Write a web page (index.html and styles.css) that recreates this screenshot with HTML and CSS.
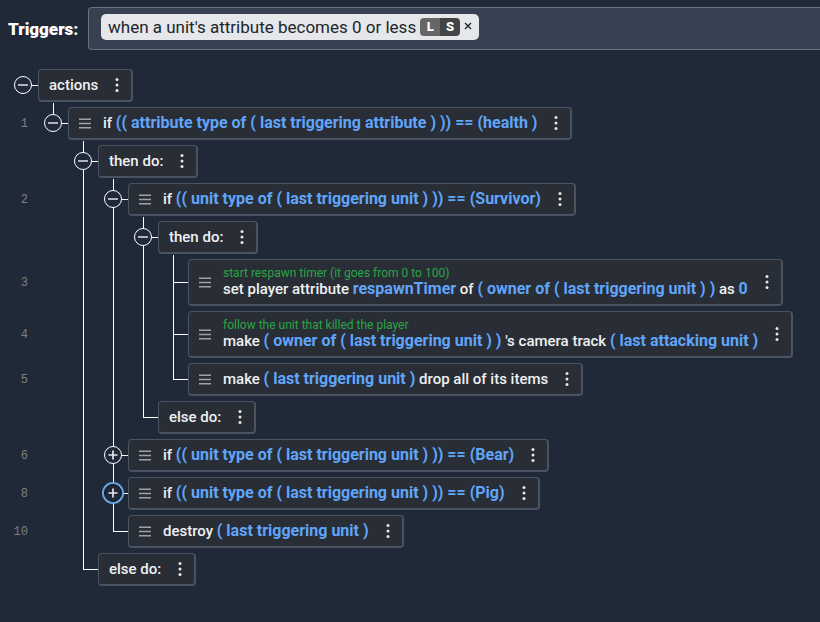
FILE: index.html
```html
<!DOCTYPE html>
<html lang="en">
<head>
<meta charset="utf-8">
<title>Script editor</title>
<link rel="stylesheet" href="styles.css">
</head>
<body>
<svg class="defs" aria-hidden="true">
  <symbol id="dots" viewBox="0 0 4 16"><circle cx="2" cy="2.5" r="1.5"/><circle cx="2" cy="8" r="1.5"/><circle cx="2" cy="13.5" r="1.5"/></symbol>
  <symbol id="grip" viewBox="0 0 12 11"><path d="M0 1.2h12M0 5.5h12M0 9.8h12" stroke="currentColor" stroke-width="1.6"/></symbol>
  <symbol id="minus" viewBox="0 0 12 12"><path d="M1 6h10" stroke="currentColor" stroke-width="2"/></symbol>
  <symbol id="plus" viewBox="0 0 12 12"><path d="M1.5 6h9M6 1.5v9" stroke="currentColor" stroke-width="1.7"/></symbol>
</svg>
<header class="triggers">
  <span class="triggers-label">Triggers:</span>
  <div class="field">
    <span class="tag"><span class="tag-text">when a unit's attribute becomes 0 or less</span><span class="badges"><b class="local">L</b><b class="server">S</b></span><button class="remove" aria-label="Remove trigger"><svg viewBox="0 0 8 8"><path d="M1 1l6 6M7 1l-6 6" stroke="currentColor" stroke-width="1.4"/></svg></button></span>
  </div>
</header>
<main class="tree">
  <div class="row">
    <div class="gutter root"><button class="toggle" aria-label="Collapse"><svg><use href="#minus"/></svg></button></div>
    <div class="node"><span class="text">actions</span><button class="menu" aria-label="Menu"><svg><use href="#dots"/></svg></button></div>
  </div>
  <div class="row">
    <div class="gutter">1</div><i class="slot end first"><button class="toggle" aria-label="Collapse"><svg><use href="#minus"/></svg></button></i>
    <div class="node"><svg class="grip"><use href="#grip"/></svg><span class="text">if <a href="#">(( attribute type of ( last triggering attribute ) )) == (health )</a></span><button class="menu" aria-label="Menu"><svg><use href="#dots"/></svg></button></div>
  </div>
  <div class="row">
    <div class="gutter"></div><i class="slot"></i><i class="slot tee first"><button class="toggle" aria-label="Collapse"><svg><use href="#minus"/></svg></button></i>
    <div class="node"><span class="text">then do:</span><button class="menu" aria-label="Menu"><svg><use href="#dots"/></svg></button></div>
  </div>
  <div class="row">
    <div class="gutter">2</div><i class="slot"></i><i class="slot line"></i><i class="slot tee first"><button class="toggle" aria-label="Collapse"><svg><use href="#minus"/></svg></button></i>
    <div class="node"><svg class="grip"><use href="#grip"/></svg><span class="text">if <a href="#">(( unit type of ( last triggering unit ) )) == (Survivor)</a></span><button class="menu" aria-label="Menu"><svg><use href="#dots"/></svg></button></div>
  </div>
  <div class="row">
    <div class="gutter"></div><i class="slot"></i><i class="slot line"></i><i class="slot line"></i><i class="slot tee first"><button class="toggle" aria-label="Collapse"><svg><use href="#minus"/></svg></button></i>
    <div class="node"><span class="text">then do:</span><button class="menu" aria-label="Menu"><svg><use href="#dots"/></svg></button></div>
  </div>
  <div class="row">
    <div class="gutter">3</div><i class="slot"></i><i class="slot line"></i><i class="slot line"></i><i class="slot line"></i><i class="slot tee first"></i>
    <div class="node"><svg class="grip"><use href="#grip"/></svg><span class="text"><span class="comment">start respawn timer (it goes from 0 to 100)</span>set player attribute <a href="#">respawnTimer</a> of <a href="#">( owner of ( last triggering unit ) )</a> as <a href="#">0</a></span><button class="menu" aria-label="Menu"><svg><use href="#dots"/></svg></button></div>
  </div>
  <div class="row">
    <div class="gutter">4</div><i class="slot"></i><i class="slot line"></i><i class="slot line"></i><i class="slot line"></i><i class="slot tee"></i>
    <div class="node"><svg class="grip"><use href="#grip"/></svg><span class="text"><span class="comment">follow the unit that killed the player</span>make <a href="#">( owner of ( last triggering unit ) )</a> 's camera track <a href="#">( last attacking unit )</a></span><button class="menu" aria-label="Menu"><svg><use href="#dots"/></svg></button></div>
  </div>
  <div class="row">
    <div class="gutter">5</div><i class="slot"></i><i class="slot line"></i><i class="slot line"></i><i class="slot line"></i><i class="slot end"></i>
    <div class="node"><svg class="grip"><use href="#grip"/></svg><span class="text">make <a href="#">( last triggering unit )</a> drop all of its items</span><button class="menu" aria-label="Menu"><svg><use href="#dots"/></svg></button></div>
  </div>
  <div class="row">
    <div class="gutter"></div><i class="slot"></i><i class="slot line"></i><i class="slot line"></i><i class="slot end"></i>
    <div class="node"><span class="text">else do:</span><button class="menu" aria-label="Menu"><svg><use href="#dots"/></svg></button></div>
  </div>
  <div class="row">
    <div class="gutter">6</div><i class="slot"></i><i class="slot line"></i><i class="slot tee"><button class="toggle" aria-label="Expand"><svg><use href="#plus"/></svg></button></i>
    <div class="node"><svg class="grip"><use href="#grip"/></svg><span class="text">if <a href="#">(( unit type of ( last triggering unit ) )) == (Bear)</a></span><button class="menu" aria-label="Menu"><svg><use href="#dots"/></svg></button></div>
  </div>
  <div class="row">
    <div class="gutter">8</div><i class="slot"></i><i class="slot line"></i><i class="slot tee"><button class="toggle active" aria-label="Expand"><svg><use href="#plus"/></svg></button></i>
    <div class="node"><svg class="grip"><use href="#grip"/></svg><span class="text">if <a href="#">(( unit type of ( last triggering unit ) )) == (Pig)</a></span><button class="menu" aria-label="Menu"><svg><use href="#dots"/></svg></button></div>
  </div>
  <div class="row">
    <div class="gutter">10</div><i class="slot"></i><i class="slot line"></i><i class="slot end"></i>
    <div class="node"><svg class="grip"><use href="#grip"/></svg><span class="text">destroy <a href="#">( last triggering unit )</a></span><button class="menu" aria-label="Menu"><svg><use href="#dots"/></svg></button></div>
  </div>
  <div class="row">
    <div class="gutter"></div><i class="slot"></i><i class="slot end"></i>
    <div class="node"><span class="text">else do:</span><button class="menu" aria-label="Menu"><svg><use href="#dots"/></svg></button></div>
  </div>
</main>
</body>
</html>
```
FILE: styles.css
```css
* { box-sizing: border-box; }
body {
  margin: 0;
  min-height: 100vh;
  overflow-x: hidden;
  background: #1f2937;
  color: #f0f0f0;
  font: 500 15px/16px Roboto, "Liberation Sans", sans-serif;
}
button { padding: 0; border: 0; background: none; color: inherit; font: inherit; cursor: pointer; }
svg { display: block; }
.defs { position: absolute; width: 0; height: 0; }

.triggers { display: flex; align-items: center; padding: 7px 0 0 8px; }
.triggers-label { flex: 0 0 80px; color: #fff; font-size: 17px; font-weight: 900; }
.field {
  flex: 1;
  padding: 6px 12px 9px;
  border: 1px solid #6b7280;
  border-right: 0;
  border-radius: 4px 0 0 4px;
  background: #374151;
}
.tag {
  display: inline-flex;
  align-items: center;
  height: 26px;
  padding: 0 7px;
  border-radius: 5px;
  background: #e5e7eb;
  color: #212529;
  vertical-align: top;
}
.tag-text { font-size: 17px; font-weight: 400; white-space: nowrap; }
.badges {
  display: flex;
  margin-left: 4px;
  overflow: hidden;
  border-radius: 4px;
  color: #fff;
  font-size: 13px;
  line-height: 18px;
  text-align: center;
}
.badges b { width: 20px; font-weight: 900; }
.local { background: #666; }
.server { background: #444; }
.remove { margin: 0 0 3px 4px; }
.remove svg { width: 8px; height: 8px; }

.tree { padding-top: 16px; }
.row { display: flex; }
.gutter {
  flex: 0 0 38px;
  align-self: center;
  padding: 2px 10px 0 0;
  color: #808080;
  font: 12px/16px "Liberation Mono", monospace;
  text-align: right;
}
.slot, .root {
  position: relative;
  display: flex;
  align-items: center;
  justify-content: center;
}
.slot { flex: 0 0 30px; }
.root { align-self: stretch; padding: 0 0 0 8px; }
.line::before, .tee::before, .end::before {
  content: "";
  position: absolute;
  top: 0;
  bottom: 0;
  left: 15px;
  width: 1px;
  background: #fff;
}
.end::before { bottom: 50%; }
.first::before { top: -1px; }
.tee::after, .end::after, .root::after {
  content: "";
  position: absolute;
  top: 50%;
  right: 0;
  width: 15px;
  height: 1px;
  background: #fff;
}
.toggle {
  z-index: 1;
  display: flex;
  align-items: center;
  justify-content: center;
  width: 18px;
  height: 18px;
  border: 1px solid #fff;
  border-radius: 50%;
  background: #1f2937;
  color: #b0b4ba;
}
.toggle svg { flex: none; width: 12px; height: 12px; }
.toggle[aria-label="Expand"] { color: #e5e7eb; }
.active {
  border-color: #101010;
  box-shadow: 0 0 0 2px #67a4e4;
}

.node {
  display: flex;
  align-items: center;
  margin: 3px 0 2px;
  padding: 7px 4px 7px 10px;
  border: 1px solid #495361;
  border-right-width: 2px;
  border-bottom-width: 2px;
  border-radius: 4px;
  background: #282d36;
  white-space: nowrap;
}
.node a { color: #60a5fa; font-size: 16px; line-height: 0; font-weight: 700; text-decoration: none; }
.comment { display: block; margin-bottom: 2px; color: #28a745; font-size: 12px; line-height: 12px; font-weight: 400; }
.grip { width: 12px; height: 11px; margin-right: 12px; color: #a0a2a5; }
.menu { width: 20px; margin-left: 9px; }
.menu svg { width: 4px; height: 16px; margin: 0 auto; fill: #e8e8e8; }
```
